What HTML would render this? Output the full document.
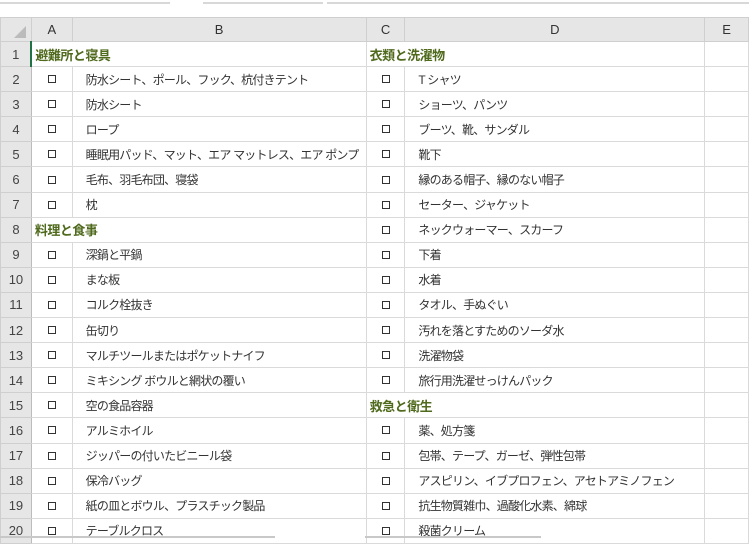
<!DOCTYPE html>
<html><head><meta charset="utf-8"><style>
body{margin:0;width:749px;height:543px;overflow:hidden;background:#fff;font-family:"Liberation Sans","Noto Sans CJK JP",sans-serif;position:relative}
table{position:absolute;left:0;top:17px;border-collapse:collapse;table-layout:fixed}
td{height:24.1px;border:1px solid #dadada;padding:0;font-size:12px;color:#333;white-space:nowrap;overflow:hidden;letter-spacing:-0.8px}
tr.h td{background:#e6e6e6;text-align:center;color:#333;font-size:13px;height:23px;border-color:#cfcfcf;letter-spacing:0}
td.r{background:#e6e6e6;text-align:center;font-size:13px;color:#444;border-color:#cfcfcf;border-right:1px solid #bcbcbc;letter-spacing:0}
td.c{text-align:center;font-size:0}
td.c::after{content:"";display:inline-block;width:6px;height:6px;border:1.5px solid #333;vertical-align:middle}
td.t{padding-left:13px}
td.s{color:#4f6a1c;font-weight:bold;font-size:13px;padding-left:3px;border-right:none;letter-spacing:-0.5px}
.top{position:absolute;top:2px;height:2px;background:#d8d8d8}
.bot{position:absolute;top:536px;height:2px;background:#c8c8c8}
.tri{position:absolute;left:14px;top:26px;width:0;height:0;border-left:12px solid transparent;border-bottom:12px solid #bbb}
</style></head><body>
<div class="top" style="left:0;width:170px"></div><div class="top" style="left:203px;width:120px"></div><div class="top" style="left:327px;width:422px"></div>
<table>
<colgroup><col style="width:31px"><col style="width:41px"><col style="width:294px"><col style="width:39px"><col style="width:300px"><col style="width:44px"></colgroup>
<tr class="h"><td style="background:#e6e6e6"></td><td>A</td><td>B</td><td>C</td><td>D</td><td>E</td></tr>
<tr><td class="r" style="border-right:2px solid #217346">1</td><td class="s" colspan="2">避難所と寝具</td><td class="s" colspan="2">衣類と洗濯物</td><td></td></tr>
<tr><td class="r">2</td><td class="c">□</td><td class="t">防水シート、ポール、フック、杭付きテント</td><td class="c">□</td><td class="t">T シャツ</td><td></td></tr>
<tr><td class="r">3</td><td class="c">□</td><td class="t">防水シート</td><td class="c">□</td><td class="t">ショーツ、パンツ</td><td></td></tr>
<tr><td class="r">4</td><td class="c">□</td><td class="t">ロープ</td><td class="c">□</td><td class="t">ブーツ、靴、サンダル</td><td></td></tr>
<tr><td class="r">5</td><td class="c">□</td><td class="t">睡眠用パッド、マット、エア マットレス、エア ポンプ</td><td class="c">□</td><td class="t">靴下</td><td></td></tr>
<tr><td class="r">6</td><td class="c">□</td><td class="t">毛布、羽毛布団、寝袋</td><td class="c">□</td><td class="t">縁のある帽子、縁のない帽子</td><td></td></tr>
<tr><td class="r">7</td><td class="c">□</td><td class="t">枕</td><td class="c">□</td><td class="t">セーター、ジャケット</td><td></td></tr>
<tr><td class="r">8</td><td class="s" colspan="2" style="border-right:1px solid #dadada">料理と食事</td><td class="c">□</td><td class="t">ネックウォーマー、スカーフ</td><td></td></tr>
<tr><td class="r">9</td><td class="c">□</td><td class="t">深鍋と平鍋</td><td class="c">□</td><td class="t">下着</td><td></td></tr>
<tr><td class="r">10</td><td class="c">□</td><td class="t">まな板</td><td class="c">□</td><td class="t">水着</td><td></td></tr>
<tr><td class="r">11</td><td class="c">□</td><td class="t">コルク栓抜き</td><td class="c">□</td><td class="t">タオル、手ぬぐい</td><td></td></tr>
<tr><td class="r">12</td><td class="c">□</td><td class="t">缶切り</td><td class="c">□</td><td class="t">汚れを落とすためのソーダ水</td><td></td></tr>
<tr><td class="r">13</td><td class="c">□</td><td class="t">マルチツールまたはポケットナイフ</td><td class="c">□</td><td class="t">洗濯物袋</td><td></td></tr>
<tr><td class="r">14</td><td class="c">□</td><td class="t">ミキシング ボウルと網状の覆い</td><td class="c">□</td><td class="t">旅行用洗濯せっけんパック</td><td></td></tr>
<tr><td class="r">15</td><td class="c">□</td><td class="t">空の食品容器</td><td class="s" colspan="2" style="border-right:1px solid #dadada">救急と衛生</td><td></td></tr>
<tr><td class="r">16</td><td class="c">□</td><td class="t">アルミホイル</td><td class="c">□</td><td class="t">薬、処方箋</td><td></td></tr>
<tr><td class="r">17</td><td class="c">□</td><td class="t">ジッパーの付いたビニール袋</td><td class="c">□</td><td class="t">包帯、テープ、ガーゼ、弾性包帯</td><td></td></tr>
<tr><td class="r">18</td><td class="c">□</td><td class="t">保冷バッグ</td><td class="c">□</td><td class="t">アスピリン、イブプロフェン、アセトアミノフェン</td><td></td></tr>
<tr><td class="r">19</td><td class="c">□</td><td class="t">紙の皿とボウル、プラスチック製品</td><td class="c">□</td><td class="t">抗生物質雑巾、過酸化水素、綿球</td><td></td></tr>
<tr><td class="r">20</td><td class="c">□</td><td class="t">テーブルクロス</td><td class="c">□</td><td class="t">殺菌クリーム</td><td></td></tr>
</table>
<div class="tri"></div>
<div class="bot" style="left:0;width:275px"></div><div class="bot" style="left:365px;width:176px"></div>
</body></html>
